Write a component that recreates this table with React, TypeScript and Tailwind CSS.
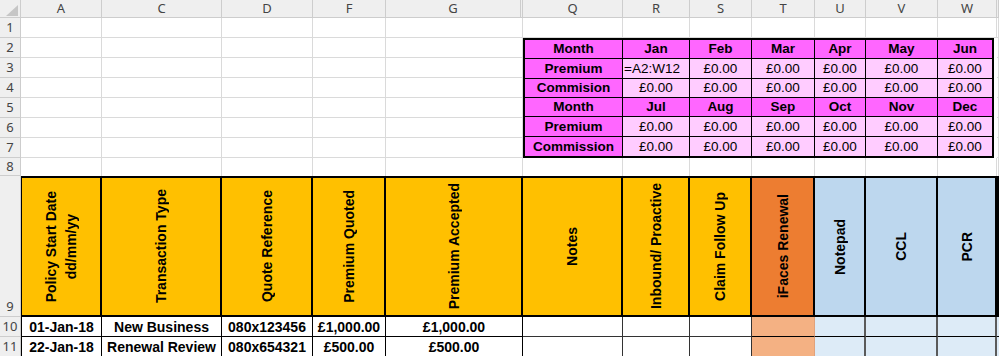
import React from "react";

const COLS = ["A", "C", "D", "F", "G", "Q", "R", "S", "T", "U", "V", "W", ""];

const HDR =
  "flex items-center justify-center bg-[#efefef] border-r border-b border-[#cdcdcd] text-[13px] text-[#444] font-['Noto_Sans',sans-serif] leading-none";
const ROWHDR =
  "flex items-center justify-center bg-[#efefef] border-r border-b border-[#cdcdcd] text-[13px] text-[#444] font-['Noto_Sans',sans-serif] leading-none";
const BODY = "bg-white border-r border-b border-[#dadada]";

type H9 = { t: React.ReactNode; bg: string; lh?: string };

const ROW9: H9[] = [
  {
    t: (
      <>
        Policy Start Date
        <br />
        dd/mm/yy
      </>
    ),
    bg: "bg-[#ffc000] border-l border-l-black",
    lh: "leading-[20px]",
  },
  { t: "Transaction Type", bg: "bg-[#ffc000]" },
  { t: "Quote Reference", bg: "bg-[#ffc000]" },
  { t: "Premium Quoted", bg: "bg-[#ffc000]" },
  { t: "Premium Accepted", bg: "bg-[#ffc000]" },
  { t: "Notes", bg: "bg-[#ffc000]" },
  { t: "Inbound/ Proactive", bg: "bg-[#ffc000]" },
  { t: "Claim Follow Up", bg: "bg-[#ffc000]" },
  { t: "iFaces Renewal", bg: "bg-[#ed7d31]" },
  { t: "Notepad", bg: "bg-[#bdd7ee]" },
  { t: "CCL", bg: "bg-[#bdd7ee]" },
  { t: "PCR", bg: "bg-[#bdd7ee]" },
  { t: "", bg: "bg-[#bdd7ee]" },
];

const DATA = [
  ["01-Jan-18", "New Business", "080x123456", "£1,000.00", "£1,000.00"],
  ["22-Jan-18", "Renewal Review", "080x654321", "£500.00", "£500.00"],
];

type PinkRow = { head: boolean; cells: string[] };
const PINK: PinkRow[] = [
  { head: true, cells: ["Month", "Jan", "Feb", "Mar", "Apr", "May", "Jun"] },
  { head: false, cells: ["Premium", "=A2:W12", "£0.00", "£0.00", "£0.00", "£0.00", "£0.00"] },
  { head: false, cells: ["Commision", "£0.00", "£0.00", "£0.00", "£0.00", "£0.00", "£0.00"] },
  { head: true, cells: ["Month", "Jul", "Aug", "Sep", "Oct", "Nov", "Dec"] },
  { head: false, cells: ["Premium", "£0.00", "£0.00", "£0.00", "£0.00", "£0.00", "£0.00"] },
  { head: false, cells: ["Commission", "£0.00", "£0.00", "£0.00", "£0.00", "£0.00", "£0.00"] },
];

function PinkTable() {
  return (
    <div className="col-start-7 col-end-14 row-start-3 row-end-9 mr-[3px] grid grid-cols-[98px_67px_62px_63px_51px_72px_1fr] grid-rows-[repeat(6,minmax(0,1fr))] border-2 border-black text-[13.5px] leading-none">
      {PINK.map((r, ri) =>
        r.cells.map((c, ci) => {
          const bold = r.head || ci === 0;
          const bg = bold ? "bg-[#ff66ff]" : "bg-[#ffccff]";
          const left = ri === 1 && ci === 1;
          return (
            <div
              key={`${ri}-${ci}`}
              className={`flex items-center ${left ? "justify-start pl-[1px]" : "justify-center"} ${bg} ${bold ? "font-bold" : "font-normal"} ${ci < 6 ? "border-r" : ""} ${ri < 5 ? "border-b" : ""} border-black whitespace-nowrap overflow-hidden`}
            >
              {c}
            </div>
          );
        })
      )}
    </div>
  );
}

function Corner() {
  return (
    <div className="bg-[#efefef] border-r border-b border-[#cdcdcd]">
      <svg width="20" height="17" viewBox="0 0 20 17">
        <polygon points="18,5 18,16 6,16" fill="#c6c6c6" />
      </svg>
    </div>
  );
}

export default function App() {
  const rows: React.ReactNode[] = [];

  rows.push(<Corner key="corner" />);
  COLS.forEach((c, i) => {
    rows.push(
      <div
        key={`h-${i}`}
        className={`${HDR} ${i === 4 ? "border-r-[3px] border-double" : ""}`}
      >
        {c}
      </div>
    );
  });

  for (let r = 1; r <= 8; r++) {
    rows.push(
      <div key={`rh-${r}`} className={ROWHDR}>
        {r}
      </div>
    );
    COLS.forEach((_, ci) => {
      if (r >= 2 && r <= 7 && ci >= 5 && ci <= 11) return;
      rows.push(
        <div
          key={`c-${r}-${ci}`}
          className={r === 8 ? "bg-white border-r border-[#dadada]" : BODY}
        />
      );
    });
  }

  rows.push(
    <div key="rh-9" className={`${ROWHDR} !items-end pb-[3px]`}>
      9
    </div>
  );
  ROW9.forEach((h, i) => {
    rows.push(
      <div
        key={`r9-${i}`}
        className={`flex items-center justify-center overflow-hidden border-t-2 border-b-2 border-r-2 border-black ${h.bg}`}
      >
        <span
          className={`[writing-mode:vertical-rl] rotate-180 text-center font-bold text-[14px] whitespace-nowrap ${h.lh ?? "leading-[16px]"}`}
        >
          {h.t}
        </span>
      </div>
    );
  });

  DATA.forEach((d, di) => {
    const rn = 10 + di;
    rows.push(
      <div key={`rh-${rn}`} className={ROWHDR}>
        {rn}
      </div>
    );
    d.forEach((v, vi) => {
      rows.push(
        <div
          key={`d-${rn}-${vi}`}
          className={`flex items-center justify-center font-bold text-[14px] leading-none whitespace-nowrap bg-white border-r border-b border-black ${vi === 0 ? "border-l" : ""}`}
        >
          {v}
        </div>
      );
    });
    for (let k = 0; k < 3; k++) {
      rows.push(
        <div key={`e-${rn}-${k}`} className="bg-white border-r border-b border-[#333]" />
      );
    }
    rows.push(
      <div
        key={`t-${rn}`}
        className="bg-[#f4b183] border-r border-r-[#e0a27c] border-b border-b-black"
      />
    );
    for (let k = 0; k < 3; k++) {
      rows.push(
        <div
          key={`b-${rn}-${k}`}
          className="bg-[#ddebf7] border-r-2 border-r-[#5a5a5a] border-b border-b-black"
        />
      );
    }
    rows.push(
      <div key={`x-${rn}`} className="bg-[#ddebf7] border-b border-black" />
    );
  });

  return (
    <div className="w-[999px] h-[356px] overflow-hidden bg-white text-black font-['Liberation_Sans',Arial,sans-serif]">
      <div className="grid grid-cols-[21px_81px_120px_91px_73px_137px_100px_67px_62px_63px_51px_72px_59px_1fr] grid-rows-[18px_20px_20px_20px_20px_20px_20px_20px_18px_141px_20px_20px]">
        <PinkTable />
        {rows}
      </div>
    </div>
  );
}
